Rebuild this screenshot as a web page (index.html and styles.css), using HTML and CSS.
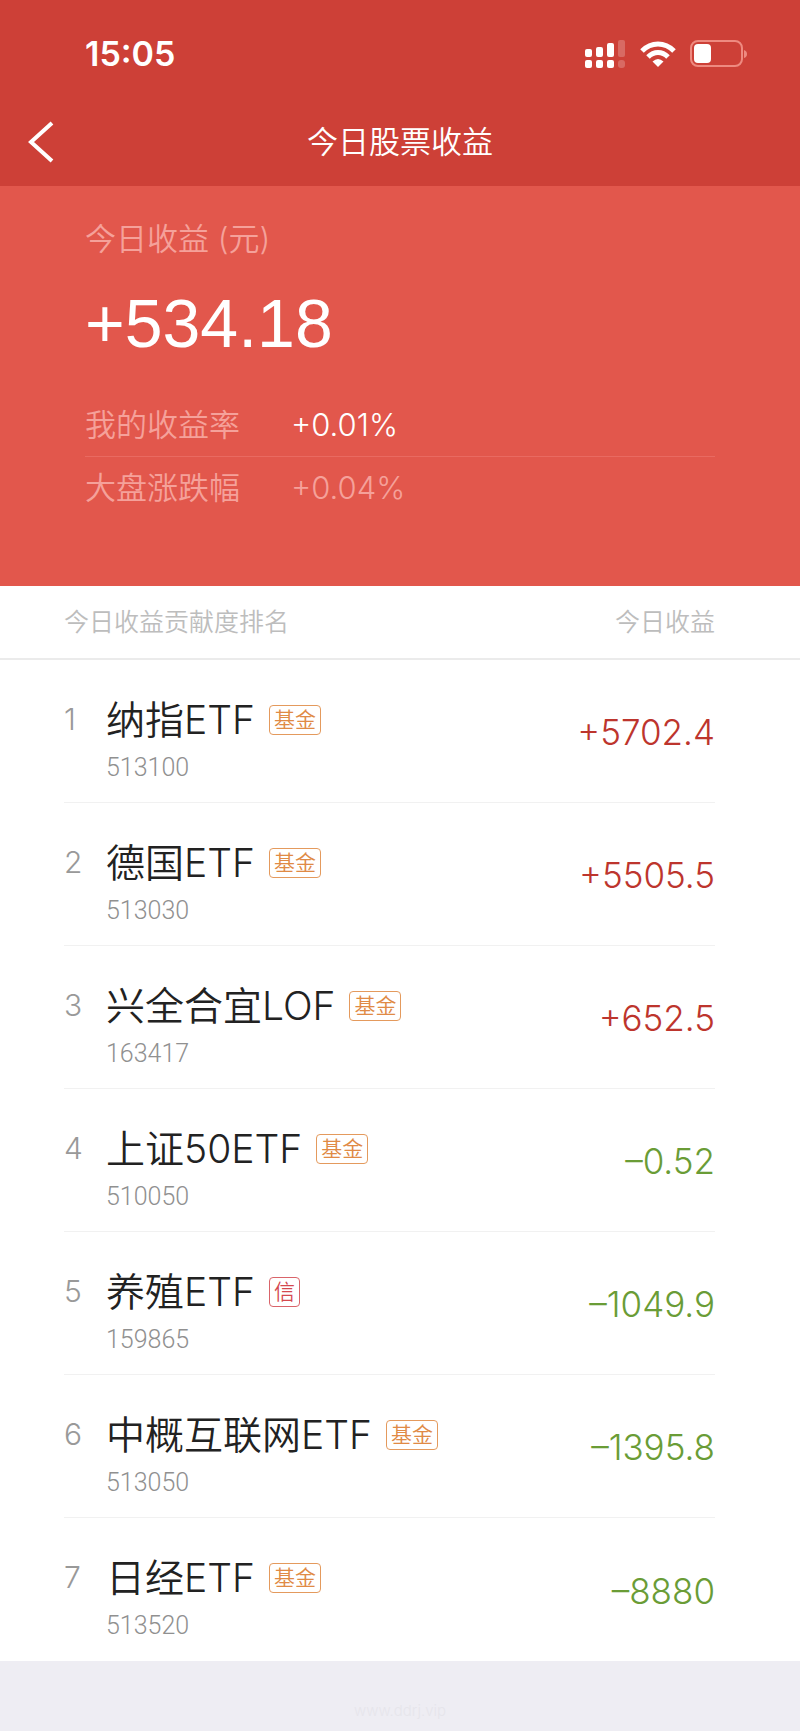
FILE: index.html
```html
<!DOCTYPE html>
<html lang="zh-CN">
<head>
<meta charset="utf-8">
<meta name="viewport" content="width=device-width, initial-scale=1">
<title>今日股票收益</title>
<link rel="stylesheet" href="styles.css">
</head>
<body>
<header class="top">
  <div class="status">
    <time class="clock">15:05</time>
    <div class="status-icons">
      <svg width="42" height="30" viewBox="0 0 42 30" fill="#fff" aria-hidden="true">
        <rect x="1" y="10" width="7" height="8" rx="2"/>
        <rect x="12" y="8" width="7" height="10" rx="2"/>
        <rect x="23" y="4" width="7" height="14" rx="2"/>
        <rect x="1" y="21" width="7" height="8" rx="2"/>
        <rect x="12" y="21" width="7" height="8" rx="2"/>
        <rect x="23" y="21" width="7" height="8" rx="2"/>
        <g opacity=".22"><rect x="34" y="1" width="7" height="17" rx="2"/><rect x="34" y="21" width="7" height="8" rx="3"/></g>
      </svg>
      <svg width="36" height="28" viewBox="0 0 36 28" aria-hidden="true">
        <g fill="none" stroke="#fff" stroke-width="5">
          <path d="M2 11Q9 4 18 4T34 11"/>
          <path d="M8 17Q12.500 12.500 18 12.500T28 17"/>
        </g>
        <path d="M18 27L12.500 21.500Q18 16.500 23.500 21.500Z" fill="#fff"/>
      </svg>
      <svg width="57" height="28" viewBox="0 0 57 28" aria-hidden="true">
        <rect x="1" y="1" width="51" height="25" rx="7" fill="none" stroke="#ee8a80" stroke-width="2"/>
        <rect x="4" y="4" width="17" height="19" rx="4" fill="#fff"/>
        <path d="M54 10Q57 11 57 14T54 18Z" fill="#ee8a80"/>
      </svg>
    </div>
  </div>
  <nav class="nav">
    <button class="back" type="button" aria-label="返回">
      <svg width="26" height="42" viewBox="0 0 26 42" fill="none" stroke="#fff" stroke-width="4" aria-hidden="true"><path d="M24 2L3 21L24 40"/></svg>
    </button>
    <h1 class="title">今日股票收益</h1>
  </nav>
</header>
<main>
  <section class="summary">
    <p class="label">今日收益 (元)</p>
    <p class="total">+534.18</p>
    <dl class="rates">
      <div class="rate"><dt>我的收益率</dt><dd class="mine">+0.01%</dd></div>
      <div class="rate"><dt>大盘涨跌幅</dt><dd>+0.04%</dd></div>
    </dl>
  </section>
  <table class="ranking">
    <thead>
      <tr class="head"><th scope="col">今日收益贡献度排名</th><th scope="col">今日收益</th></tr>
    </thead>
    <tbody>
      <tr class="row"><td class="rank">1</td><td class="stock"><div class="name">纳指ETF<span class="tag">基金</span></div><div class="code">513100</div></td><td class="value up">+5702.4</td></tr>
      <tr class="row"><td class="rank">2</td><td class="stock"><div class="name">德国ETF<span class="tag">基金</span></div><div class="code">513030</div></td><td class="value up">+5505.5</td></tr>
      <tr class="row"><td class="rank">3</td><td class="stock"><div class="name">兴全合宜LOF<span class="tag">基金</span></div><div class="code">163417</div></td><td class="value up">+652.5</td></tr>
      <tr class="row"><td class="rank">4</td><td class="stock"><div class="name">上证50ETF<span class="tag">基金</span></div><div class="code">510050</div></td><td class="value down">–0.52</td></tr>
      <tr class="row"><td class="rank">5</td><td class="stock"><div class="name">养殖ETF<span class="tag credit">信</span></div><div class="code">159865</div></td><td class="value down">–1049.9</td></tr>
      <tr class="row"><td class="rank">6</td><td class="stock"><div class="name">中概互联网ETF<span class="tag">基金</span></div><div class="code">513050</div></td><td class="value down">–1395.8</td></tr>
      <tr class="row"><td class="rank">7</td><td class="stock"><div class="name">日经ETF<span class="tag">基金</span></div><div class="code">513520</div></td><td class="value down">–8880</td></tr>
    </tbody>
  </table>
</main>
<footer class="footer">www.ddrj.vip</footer>
</body>
</html>
```

FILE: styles.css
```css
* { box-sizing: border-box; }

body {
  margin: 0;
  background: #eeedf3;
  font-family: Inter, "Noto Sans CJK SC", sans-serif;
  font-weight: 350;
}

h1, p, dl, dd { margin: 0; font-weight: 350; }

.top { background: #cd4037; color: #fff; }

.status {
  display: flex;
  justify-content: space-between;
  align-items: center;
  padding: 33px 53px 0 85px;
}

.clock { font-size: 34px; line-height: 42px; font-weight: 600; }

.status-icons { display: flex; align-items: center; gap: 14px; }

.nav {
  display: grid;
  grid-template-columns: 80px 1fr 80px;
  align-items: center;
  height: 88px;
  margin-top: 23px;
}

.back {
  display: flex;
  margin-left: 28px;
  padding: 0;
  border: 0;
  background: none;
}

.title { font-size: 31px; line-height: 44px; text-align: center; }

.summary {
  padding: 31px 85px 69px;
  background: #e2574c;
  color: #f5a19a;
}

.label { font-size: 31px; line-height: 44px; }

.total {
  margin-top: 24px;
  color: #fff;
  font-family: "Liberation Sans", sans-serif;
  font-size: 68px;
  line-height: 76px;
}

.rates { margin-top: 32px; }

.rate {
  display: flex;
  align-items: center;
  height: 60px;
  padding-top: 2px;
  font-size: 31px;
  line-height: 44px;
}

.rate:first-child { height: 64px; padding-top: 0; border-bottom: 1px solid #e96a61; }

.rate dt { width: 206px; }

.mine { color: #fff; }

.ranking, .ranking thead, .ranking tbody { display: block; background: #fff; }

.ranking th, .ranking td { display: block; padding: 0; }

.head {
  display: flex;
  justify-content: space-between;
  padding: 18px 85px 18px 64px;
  border-bottom: 2px solid #ebebeb;
  color: #bdbdbd;
  font-size: 25px;
  line-height: 36px;
}

.head th { font-weight: 350; }

.row {
  display: flex;
  height: 143px;
  margin: 0 85px 0 64px;
  border-bottom: 1px solid #f1f1f1;
}

.row:last-child { border-bottom: 0; }

.rank {
  width: 42px;
  margin-top: 35px;
  color: #999;
  font-size: 30px;
  line-height: 48px;
}

.stock { flex: 1; margin-top: 36px; }

.name {
  display: flex;
  align-items: center;
  gap: 14px;
  color: #222;
  font-size: 39px;
  line-height: 48px;
}

.tag {
  padding: 0 4px;
  border: 1px solid #e49a5d;
  border-radius: 4px;
  color: #e08a45;
  font-size: 21px;
  line-height: 28px;
}

.credit { border-color: #d9646a; color: #d4484f; }

.code {
  color: #909090;
  font-family: Roboto, "Liberation Sans", sans-serif;
  font-weight: 300;
  font-size: 25px;
  line-height: 48px;
}

.value { align-self: center; padding-top: 2px; font-size: 35px; line-height: 44px; }

.ranking .value { padding-top: 2px; }

.up { color: #bd352d; }

.down { color: #6a9c36; }

.footer {
  padding: 36px 0 6px;
  color: #e6e5eb;
  font-size: 15px;
  line-height: 28px;
  text-align: center;
}
```
